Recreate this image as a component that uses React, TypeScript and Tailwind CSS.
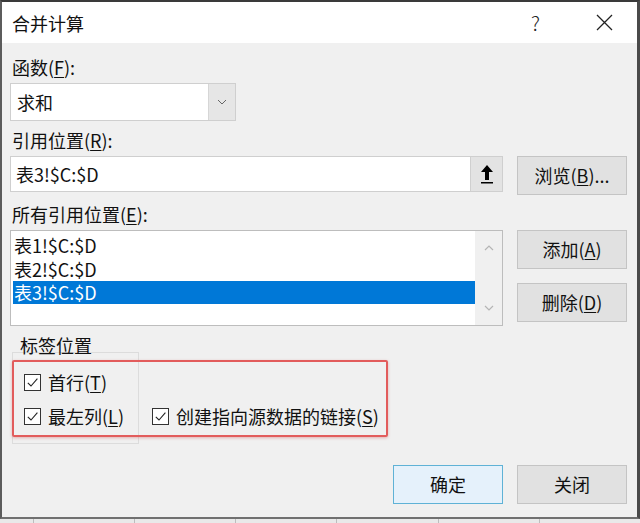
import React from 'react';

const font = { fontFamily: '"Noto Sans CJK SC", "Noto Sans", sans-serif' };

const Check = ({ label, hot }: { label: string; hot: string }) => (
  <div className="flex items-center h-[24px]">
    <div className="w-[17px] h-[17px] border border-[#333] bg-white flex items-center justify-center shrink-0">
      <svg width="13" height="13" viewBox="0 0 13 13">
        <path d="M1.8 6.8 L5 10 L11.4 2.6" fill="none" stroke="#222" strokeWidth="1.1" />
      </svg>
    </div>
    <span className="ml-[7px] text-[18px] leading-[24px] text-[#111]">
      {label}(<span className="underline underline-offset-2">{hot}</span>)
    </span>
  </div>
);

const Btn = ({ children, primary }: { children: React.ReactNode; primary?: boolean }) => (
  <div
    className={`w-[110px] h-[39px] flex items-center justify-center text-[18px] text-[#111] border ${
      primary ? 'bg-[#e5f1fb] border-[#5fb2d6]' : 'bg-[#e1e1e1] border-[#c4c4c4]'
    }`}
  >
    {children}
  </div>
);

const App: React.FC = () => {
  const cols = [33, 134, 235, 336, 438, 539];
  return (
    <div className="w-[640px] h-[523px] bg-[#e8e8e8] overflow-hidden flex flex-col" style={font}>
      <div className="h-[519px] flex flex-col bg-[#f0f0f0] border-l-2 border-r-[3px] border-t-2 border-b-2 border-l-[#5c5c5c] border-r-[#4a4a4a] border-t-[#3a3a3a] border-b-[#707070]">
        {/* title bar */}
        <div className="h-[41px] bg-white flex items-center pl-[10px] pr-[24px] shrink-0">
          <span className="text-[18px] text-[#111] leading-none">合并计算</span>
          <span className="ml-auto text-[20px] text-[#222] font-light leading-none">?</span>
          <svg className="ml-[56px]" width="17" height="17" viewBox="0 0 17 17">
            <path d="M1 1 L16 16 M16 1 L1 16" stroke="#222" strokeWidth="1.3" />
          </svg>
        </div>

        {/* body */}
        <div className="flex-1 flex flex-col pl-[8px] pr-[10px] pt-[13px]">
          <div className="text-[18px] leading-[22px] text-[#111] pl-[2px]">
            函数(<span className="underline underline-offset-2">F</span>):
          </div>
          <div className="mt-[5px] w-[226px] h-[38px] bg-white border border-[#cfcfcf] flex">
            <div className="flex-1 flex items-center pl-[6px] text-[18px] text-[#111]">求和</div>
            <div className="w-[27px] bg-[#e6e6e6] border-l border-[#d6d6d6] flex items-center justify-center">
              <svg width="10" height="6" viewBox="0 0 10 6">
                <path d="M1 1 L5 5 L9 1" fill="none" stroke="#666" strokeWidth="1" />
              </svg>
            </div>
          </div>

          <div className="mt-[8px] text-[18px] leading-[22px] text-[#111] pl-[2px]">
            引用位置(<span className="underline underline-offset-2">R</span>):
          </div>
          <div className="mt-[5px] flex gap-[14px]">
            <div className="w-[493px] h-[36px] bg-white border border-[#cfcfcf] flex">
              <div className="flex-1 flex items-center pl-[5px] text-[18px] text-[#111]">表3!$C:$D</div>
              <div className="w-[32px] bg-[#e3e3e3] border-l border-[#d0d0d0] flex items-center justify-center">
                <svg width="16" height="22" viewBox="0 0 16 22">
                  <path d="M8 2 L14 9 L10 9 L10 17 L6 17 L6 9 L2 9 Z" fill="#000" />
                  <rect x="2" y="19" width="12" height="1.5" fill="#000" />
                </svg>
              </div>
            </div>
            <Btn>
              浏览(<span className="underline underline-offset-2">B</span>)...
            </Btn>
          </div>

          <div className="mt-[8px] text-[18px] leading-[22px] text-[#111] pl-[2px]">
            所有引用位置(<span className="underline underline-offset-2">E</span>):
          </div>
          <div className="mt-[5px] flex gap-[14px]">
            <div className="w-[493px] h-[96px] bg-white border border-[#bdbdbd] flex">
              <div className="flex-1 pt-[2px] pl-[2px] text-[18px] text-[#111]">
                <div className="h-[24px] leading-[24px] pl-[1px]">表1!$C:$D</div>
                <div className="h-[24px] leading-[24px] pl-[1px]">表2!$C:$D</div>
                <div className="h-[23px] leading-[23px] pl-[1px] bg-[#0078d7] text-white">表3!$C:$D</div>
              </div>
              <div className="w-[27px] bg-[#f0f0f0] flex flex-col items-center justify-between py-[14px]">
                <svg width="10" height="6" viewBox="0 0 10 6">
                  <path d="M1 5 L5 1 L9 5" fill="none" stroke="#b5b5b5" strokeWidth="1.2" />
                </svg>
                <svg width="10" height="6" viewBox="0 0 10 6">
                  <path d="M1 1 L5 5 L9 1" fill="none" stroke="#b5b5b5" strokeWidth="1.2" />
                </svg>
              </div>
            </div>
            <div className="flex flex-col gap-[14px]">
              <Btn>
                添加(<span className="underline underline-offset-2">A</span>)
              </Btn>
              <Btn>
                删除(<span className="underline underline-offset-2">D</span>)
              </Btn>
            </div>
          </div>

          {/* label group */}
          <div className="relative mt-[8px]">
            <div className="absolute left-[2px] top-[18px] w-[127px] h-[92px] border border-[#dcdcdc]" />
            <div className="relative text-[18px] leading-[22px] text-[#111] pl-[10px]">标签位置</div>
            <div className="relative mt-[4px] ml-[2px] w-[376px] h-[77px] border-2 border-[#e25c5c] rounded-[2px] shadow-[0_1px_3px_rgba(200,60,60,0.35)] pl-[10px] pt-[8px]">
              <Check label="首行" hot="T" />
              <div className="mt-[10px] flex">
                <div className="w-[128px]">
                  <Check label="最左列" hot="L" />
                </div>
                <Check label="创建指向源数据的链接" hot="S" />
              </div>
            </div>
          </div>

          <div className="mt-[28px] flex justify-end gap-[14px]">
            <Btn primary>确定</Btn>
            <Btn>关闭</Btn>
          </div>
        </div>
      </div>
      <div className="flex-1 relative bg-[#e9e9e9]">
        {cols.map((x) => (
          <div key={x} className="absolute top-0 bottom-0 w-px bg-[#bdbdbd]" style={{ left: x }} />
        ))}
      </div>
    </div>
  );
};

export default App;
